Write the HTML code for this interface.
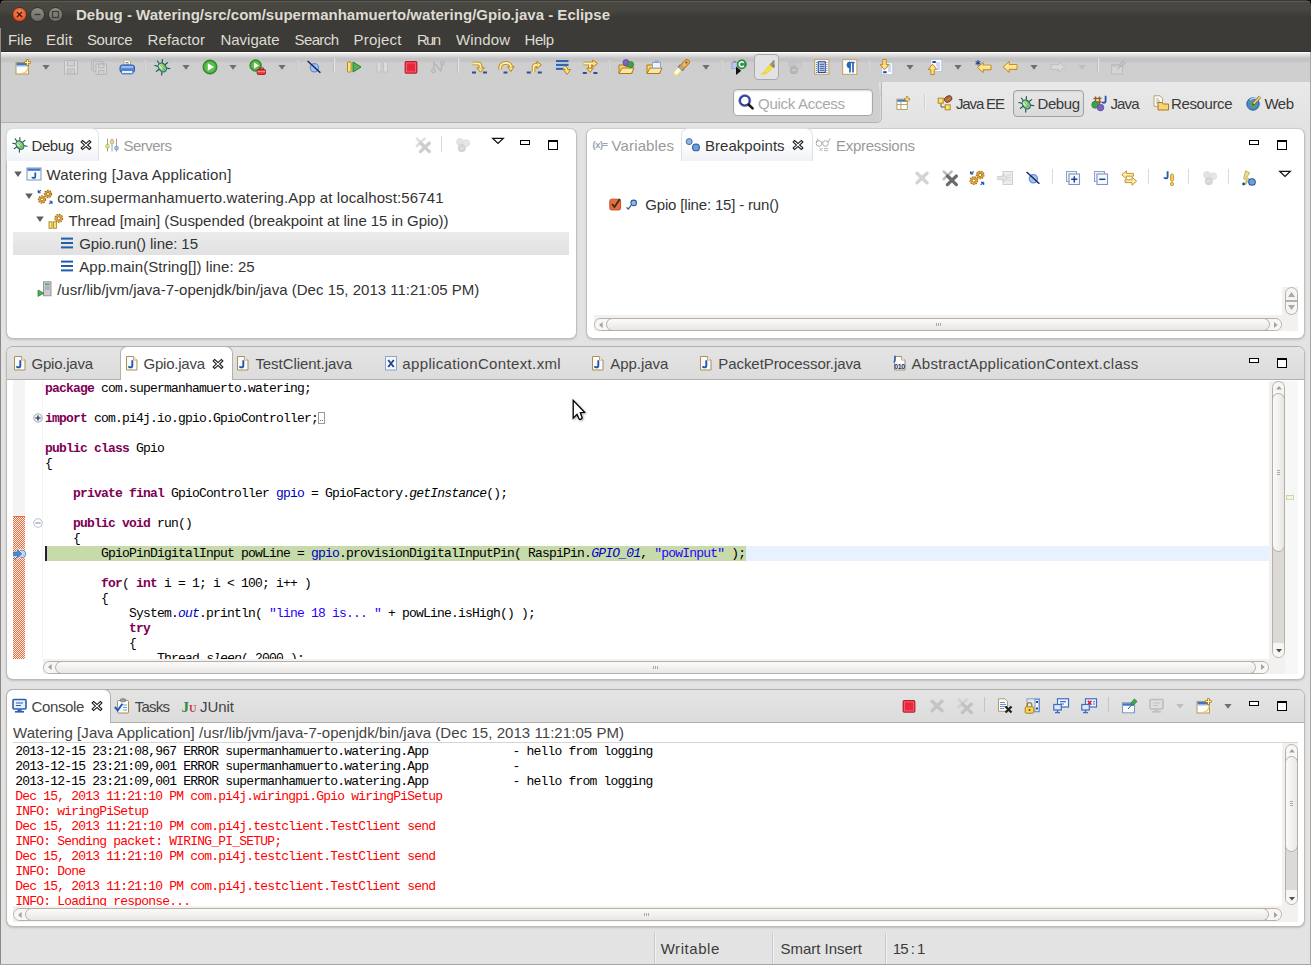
<!DOCTYPE html><html><head><meta charset="utf-8"><title>Eclipse</title><style>
*{box-sizing:border-box;margin:0;padding:0}
html,body{width:1311px;height:965px;overflow:hidden;background:#e3e3e3;font-family:"Liberation Sans",sans-serif}
.a{position:absolute}
.t{position:absolute;white-space:pre;line-height:20px;height:20px;font-family:"Liberation Sans",sans-serif}
.m{position:absolute;white-space:pre;font-family:"Liberation Mono",monospace;font-size:13px;letter-spacing:-0.8px;line-height:15px;height:15px;color:#000}
.m b{color:#7f0055}
.m .f{color:#0000c0}
.m .s{color:#2a00ff}
.m i.f{color:#0000c0}
.r{color:#ff0000}
.panel{position:absolute;background:#fff;border:1px solid #c2c0bd;border-top-color:#cfcdca;border-radius:7px;box-shadow:0 1px 2px rgba(0,0,0,.16)}
.panel.g{border-color:#b4b0ac #bdbab6 #bdbab6 #bdbab6}
.hdr{position:absolute;left:0;top:0;right:0;border-radius:6px 6px 0 0;background:linear-gradient(#e4e4e4,#dcdcdc);border-bottom:1px solid #b4b0ac}
.tab{position:absolute;background:#fff;border:1px solid #b4b0ac;border-bottom:none;border-radius:7px 7px 0 0}
.sep{position:absolute;width:1px;background:#b8b8b8}
.sbt{position:absolute;background:#f2f1f0}
.sbh{position:absolute;border:1px solid #b8b0a8;border-radius:7px;background:linear-gradient(#fbfbfa,#e9e7e5)}
.sbv{position:absolute;border:1px solid #b8b0a8;border-radius:7px;background:linear-gradient(90deg,#fbfbfa,#e9e7e5)}
svg{position:absolute;overflow:visible}
</style></head><body>
<div class="a" style="left:0;top:0;width:1311px;height:10px;background:#000"></div>
<div class="a" style="left:0;top:0;width:1311px;height:52px;background:linear-gradient(#494842 0,#474640 9px,#3c3b37 16px,#3c3b37 100%);border-radius:5px 5px 0 0;border-top:1px solid #3a3934;border-bottom:1px solid #2e2d2a"></div>
<div class="a" style="left:1px;top:1px;width:1309px;height:1px;background:#5a5952;border-radius:4px"></div>
<div class="a" style="left:12px;top:7px;width:15px;height:15px;border-radius:8px;background:radial-gradient(circle at 50% 35%,#f58a5e,#e5562a 70%,#c2411b);border:1px solid #5a2a18"></div>
<div class="a" style="left:30px;top:7px;width:15px;height:15px;border-radius:8px;background:linear-gradient(#8e8c84,#6e6c65);border:1px solid #33322e"></div>
<div class="a" style="left:48px;top:7px;width:15px;height:15px;border-radius:8px;background:linear-gradient(#8e8c84,#6e6c65);border:1px solid #33322e"></div>
<svg style="left:12px;top:7px" width="15" height="15"><path d="M5 5 L10 10 M10 5 L5 10" stroke="#4a1a0a" stroke-width="1.4"/></svg>
<svg style="left:30px;top:7px" width="15" height="15"><path d="M4.5 7.5 H10.5" stroke="#3c3b37" stroke-width="1.4"/></svg>
<svg style="left:48px;top:7px" width="15" height="15"><rect x="4.5" y="4.5" width="6" height="6" fill="none" stroke="#3c3b37" stroke-width="1.2"/></svg>
<div class="a" style="left:0;top:52px;width:1311px;height:31px;background:linear-gradient(#fff 0,#fff 1px,#eeeeee 1px,#c4c4c4 6.5px,#c5c5c5 10px,#cecece 10.5px,#cfcfcf 100%)"></div>
<div class="a" style="left:881px;top:82px;width:430px;height:46px;background:linear-gradient(#e9e9e9,#e2e2e2)"></div>
<div class="a" style="left:0;top:82px;width:882px;height:41px;background:#cfcfcf;border-bottom:1px solid #b2b2b2;border-right:1px solid #b8b8b8;border-radius:0 0 5px 0;box-shadow:inset -1px 0 #dcdcdc"></div>
<div class="a" style="left:879px;top:82px;width:2px;height:14px;background:linear-gradient(#e4e4e4,#cfcfcf)"></div>
<div class="a" style="left:733px;top:89px;width:140px;height:27px;background:#fff;border:1px solid #a8a8a8;border-radius:4px;box-shadow:inset 0 1px 2px rgba(0,0,0,.15)"></div>
<div class="a" style="left:1013px;top:90px;width:71px;height:27px;background:linear-gradient(#e6e6e6,#dadada);border:1px solid #a2a2a2;border-radius:4px;box-shadow:inset 0 1px 2px rgba(0,0,0,.08)"></div>
<div class="a" style="left:754px;top:54px;width:25px;height:26px;background:#e2e2e2;border:1px solid #a9a9a9;border-radius:4px"></div>
<div class="sep" style="left:925px;top:94px;height:16px;background:#f0f0f0;box-shadow:-1px 0 #d2d2d2"></div>

<div class="a" style="left:0;top:28px;width:1px;height:937px;background:#8d8a85"></div>
<div class="a" style="left:1310px;top:52px;width:1px;height:913px;background:#a9a6a1"></div>
<div class="a" style="left:0;top:964px;width:1311px;height:1px;background:#a9a6a1"></div>
<div class="panel" style="left:6px;top:128px;width:571px;height:211px">
<div class="tab" style="left:-1px;top:-1px;width:93px;height:33px;background:linear-gradient(#fff 40%,#f1f2f6);border-color:#dde1ea"></div>
<div class="a" style="left:6px;top:103px;width:556px;height:23px;background:linear-gradient(#ebebeb,#e1e1e1)"></div>
</div>
<div class="panel" style="left:586px;top:128px;width:719px;height:211px">
<div class="tab" style="left:94px;top:-1px;width:132px;height:33px;background:linear-gradient(#fff 40%,#f1f2f6);border-color:#dde1ea"></div>
<div class="sbt" style="left:7px;top:186px;width:704px;height:16px"></div>
<div class="sbt" style="left:695px;top:158px;width:16px;height:44px"></div>
</div>
<div class="sbh" style="left:594px;top:318px;width:688px;height:13px;background:#dcdad7;overflow:hidden"><div class="a" style="left:0;top:0;width:14px;height:100%;background:#f7f6f5"></div><div class="a" style="right:0;top:0;width:14px;height:100%;background:#f7f6f5"></div></div><div class="sbh" style="left:606px;top:318px;width:664px;height:13px"></div><svg style="left:598.5px;top:321.5px" width="4" height="6"><path d="M3.6 0 L0 3 L3.6 6Z" fill="#a2a2a2"/></svg><svg style="left:1273.5px;top:321.5px" width="4" height="6"><path d="M0 0 L3.6 3 L0 6Z" fill="#a2a2a2"/></svg><div class="a" style="left:936px;top:323px;width:1px;height:3px;background:#aaa;box-shadow:2px 0 #aaa,4px 0 #aaa"></div>
<div class="sbv" style="left:1285px;top:287px;height:28px;width:13px;background:#f6f5f4"></div>
<svg style="left:1288px;top:292px" width="7" height="5"><path d="M0 5 L3.5 0 L7 5Z" fill="#a9a9a9"/></svg>
<svg style="left:1288px;top:305px" width="7" height="5"><path d="M0 0 L3.5 5 L7 0Z" fill="#a9a9a9"/></svg>
<div class="a" style="left:1286px;top:300px;width:11px;height:2px;background:#b8b0a8"></div>
<div class="panel g" style="left:6px;top:346px;width:1299px;height:334px">
<div class="hdr" style="height:33px"></div>
<div class="tab" style="left:113px;top:-1px;width:113px;height:34px"></div>
<div class="a" style="left:6px;top:33px;width:12px;height:278.5px;background:#f4f4f4"></div>
<div class="a" style="left:6px;top:169px;width:12px;height:142.5px;background:#f3a68a;background-image:conic-gradient(#ef6a3a 25%,#fff1ea 0 50%,#ef6a3a 0 75%,#fff1ea 0);border-top:1px solid #ee6a3c;background-size:2px 2px"></div>
<div class="a" style="left:35px;top:33px;width:1px;height:278.5px;background:#f3f3f3"></div>
<div class="a" style="left:38px;top:199px;width:1224px;height:15px;background:#e8f2fe"></div>
<div class="a" style="left:38px;top:199px;width:701px;height:15px;background:#c6dba9"></div>
<div class="a" style="left:38px;top:199px;width:2px;height:15px;background:#2a1a3a"></div>
<div class="a" style="left:-7px;top:33px;width:1269px;height:278.5px;overflow:hidden">
<div class="m" style="left:45px;top:1px"><b>package</b> com.supermanhamuerto.watering;</div>
<div class="m" style="left:45px;top:31px"><b>import</b> com.pi4j.io.gpio.GpioController;</div>
<div class="m" style="left:45px;top:61px"><b>public</b> <b>class</b> Gpio</div>
<div class="m" style="left:45px;top:76px">{</div>
<div class="m" style="left:45px;top:106px">    <b>private</b> <b>final</b> GpioController <span class="f">gpio</span> = GpioFactory.<i>getInstance</i>();</div>
<div class="m" style="left:45px;top:136px">    <b>public</b> <b>void</b> run()</div>
<div class="m" style="left:45px;top:151px">    {</div>
<div class="m" style="left:45px;top:166px">        GpioPinDigitalInput powLine = <span class="f">gpio</span>.provisionDigitalInputPin( RaspiPin.<i class="f">GPIO_01</i>, <span class="s">"powInput"</span> );</div>
<div class="m" style="left:45px;top:196px">        <b>for</b>( <b>int</b> i = 1; i &lt; 100; i++ )</div>
<div class="m" style="left:45px;top:211px">        {</div>
<div class="m" style="left:45px;top:226px">            System.<i class="f">out</i>.println( <span class="s">"line 18 is... "</span> + powLine.isHigh() );</div>
<div class="m" style="left:45px;top:241px">            <b>try</b></div>
<div class="m" style="left:45px;top:256px">            {</div>
<div class="m" style="left:45px;top:271px">                Thread.<i>sleep</i>( 2000 );</div>
<div class="a" style="left:318px;top:32px;width:7px;height:12px;border:1px solid #9a9a9a"></div><div class="a" style="left:320px;top:40px;width:1px;height:1px;background:#777;box-shadow:2px 0 #777"></div>
</div>
<div class="sbt" style="left:36px;top:311.5px;width:1242px;height:15.5px"></div><div class="a" style="left:1278px;top:311.5px;width:13px;height:15.5px;background:#f7f7f7"></div>
<div class="sbt" style="left:1262px;top:34px;width:16px;height:280px"></div>
<div class="a" style="left:1278px;top:34px;width:13px;height:280px;background:#f7f7f7"></div>
<div class="a" style="left:1279px;top:148px;width:8px;height:5px;border:1px solid #c6dba9;background:#eef5e4"></div>
</div>
<div class="sbh" style="left:43px;top:660.5px;width:1226px;height:13px;background:#dcdad7;overflow:hidden"><div class="a" style="left:0;top:0;width:14px;height:100%;background:#f7f6f5"></div><div class="a" style="right:0;top:0;width:14px;height:100%;background:#f7f6f5"></div></div><div class="sbh" style="left:55px;top:660.5px;width:1201px;height:13px"></div><svg style="left:47.5px;top:664.0px" width="4" height="6"><path d="M3.6 0 L0 3 L3.6 6Z" fill="#a2a2a2"/></svg><svg style="left:1260.5px;top:664.0px" width="4" height="6"><path d="M0 0 L3.6 3 L0 6Z" fill="#a2a2a2"/></svg><div class="a" style="left:653px;top:665.5px;width:1px;height:3px;background:#aaa;box-shadow:2px 0 #aaa,4px 0 #aaa"></div>
<div class="sbv" style="left:1272px;top:381px;height:276.5px;width:13px;background:#dcdad7;overflow:hidden"><div class="a" style="left:0;top:0;height:14px;width:100%;background:#f7f6f5"></div><div class="a" style="left:0;bottom:0;height:14px;width:100%;background:#f7f6f5"></div></div><div class="sbv" style="left:1272px;top:393px;height:159px;width:13px"></div><svg style="left:1275.5px;top:386px" width="6" height="4"><path d="M0 3.6 L3 0 L6 3.6Z" fill="#a2a2a2"/></svg><svg style="left:1275.5px;top:649.0px" width="6" height="4"><path d="M0 0 L3 3.6 L6 0Z" fill="#4e4e4e"/></svg><div class="a" style="left:1277px;top:470px;width:3px;height:1px;background:#aaa;box-shadow:0 2px #aaa,0 4px #aaa"></div>
<div class="panel g" style="left:6px;top:689px;width:1299px;height:238px">
<div class="hdr" style="height:33px"></div>
<div class="tab" style="left:-1px;top:-1px;width:105px;height:34px;border-left-color:#b9b5b0"></div>
<div class="a" style="left:6px;top:51.6px;width:1285px;height:1px;background:#d6d6d6"></div>
<div class="a" style="left:-6px;top:53px;width:1290px;height:163px;overflow:hidden">
<div class="m " style="left:14.3px;top:1px">2013-12-15 23:21:08,967 ERROR supermanhamuerto.watering.App            - hello from logging</div>
<div class="m " style="left:14.3px;top:16px">2013-12-15 23:21:09,001 ERROR supermanhamuerto.watering.App            - </div>
<div class="m " style="left:14.3px;top:31px">2013-12-15 23:21:09,001 ERROR supermanhamuerto.watering.App            - hello from logging</div>
<div class="m r" style="left:14.3px;top:46px">Dec 15, 2013 11:21:10 PM com.pi4j.wiringpi.Gpio wiringPiSetup</div>
<div class="m r" style="left:14.3px;top:61px">INFO: wiringPiSetup</div>
<div class="m r" style="left:14.3px;top:76px">Dec 15, 2013 11:21:10 PM com.pi4j.testclient.TestClient send</div>
<div class="m r" style="left:14.3px;top:91px">INFO: Sending packet: WIRING_PI_SETUP;</div>
<div class="m r" style="left:14.3px;top:106px">Dec 15, 2013 11:21:10 PM com.pi4j.testclient.TestClient send</div>
<div class="m r" style="left:14.3px;top:121px">INFO: Done</div>
<div class="m r" style="left:14.3px;top:136px">Dec 15, 2013 11:21:10 PM com.pi4j.testclient.TestClient send</div>
<div class="m r" style="left:14.3px;top:151px">INFO: Loading response...</div>
</div>
<div class="sbt" style="left:6px;top:216px;width:1285px;height:16px"></div>
<div class="sbt" style="left:1275px;top:53px;width:16px;height:165px"></div>
</div>
<div class="sbh" style="left:13px;top:908px;width:1269px;height:13px;background:#dcdad7;overflow:hidden"><div class="a" style="left:0;top:0;width:14px;height:100%;background:#f7f6f5"></div><div class="a" style="right:0;top:0;width:14px;height:100%;background:#f7f6f5"></div></div><div class="sbh" style="left:25px;top:908px;width:1244px;height:13px"></div><svg style="left:17.5px;top:911.5px" width="4" height="6"><path d="M3.6 0 L0 3 L3.6 6Z" fill="#a2a2a2"/></svg><svg style="left:1273.5px;top:911.5px" width="4" height="6"><path d="M0 0 L3.6 3 L0 6Z" fill="#a2a2a2"/></svg><div class="a" style="left:644px;top:913px;width:1px;height:3px;background:#aaa;box-shadow:2px 0 #aaa,4px 0 #aaa"></div>
<div class="sbv" style="left:1285px;top:743.5px;height:161.5px;width:13px;background:#dcdad7;overflow:hidden"><div class="a" style="left:0;top:0;height:14px;width:100%;background:#f7f6f5"></div><div class="a" style="left:0;bottom:0;height:14px;width:100%;background:#f7f6f5"></div></div><div class="sbv" style="left:1285px;top:755.5px;height:96.5px;width:13px"></div><svg style="left:1288.5px;top:748.5px" width="6" height="4"><path d="M0 3.6 L3 0 L6 3.6Z" fill="#a2a2a2"/></svg><svg style="left:1288.5px;top:896.5px" width="6" height="4"><path d="M0 0 L3 3.6 L6 0Z" fill="#4e4e4e"/></svg><div class="a" style="left:1290px;top:801px;width:3px;height:1px;background:#aaa;box-shadow:0 2px #aaa,0 4px #aaa"></div>
<div class="sep" style="left:654px;top:933px;height:31px;background:#c9c9c9;box-shadow:1px 0 #f1f1f1"></div>
<div class="sep" style="left:772px;top:933px;height:31px;background:#c9c9c9;box-shadow:1px 0 #f1f1f1"></div>
<div class="sep" style="left:885px;top:933px;height:31px;background:#c9c9c9;box-shadow:1px 0 #f1f1f1"></div>
<div class="a" style="left:520px;top:140px;width:10px;height:4.5px;border:1px solid #000;background:#fff"></div><div class="a" style="left:548px;top:140px;width:10px;height:10px;border:1px solid #000;border-top-width:2px;background:#fff"></div>
<div class="a" style="left:1249px;top:140px;width:10px;height:4.5px;border:1px solid #000;background:#fff"></div><div class="a" style="left:1277px;top:140px;width:10px;height:10px;border:1px solid #000;border-top-width:2px;background:#fff"></div>
<div class="a" style="left:1249px;top:358px;width:10px;height:4.5px;border:1px solid #000;background:#fff"></div><div class="a" style="left:1277px;top:358px;width:10px;height:10px;border:1px solid #000;border-top-width:2px;background:#fff"></div>
<div class="a" style="left:1249px;top:701px;width:10px;height:4.5px;border:1px solid #000;background:#fff"></div><div class="a" style="left:1277px;top:701px;width:10px;height:10px;border:1px solid #000;border-top-width:2px;background:#fff"></div>
<svg style="left:14.5px;top:59.0px" width="16.0" height="16.0" viewBox="0 0 16 16"><rect x="1" y="3.5" width="12.5" height="11.5" fill="#fcfdff" stroke="#b39758"/><rect x="1.5" y="4" width="11.5" height="2.6" fill="#3f78c8"/><rect x="1.5" y="6.6" width="11.5" height="1" fill="#a9c6ec"/><path d="M13 8 q0 6 -7 6.5" fill="none" stroke="#f3c945" stroke-width="1.2"/><path d="M12.5 0.3 v6.4 M9.3 3.5 h6.4" stroke="#b07a10" stroke-width="2.6"/><path d="M12.5 1 v5 M10 3.5 h5" stroke="#fff2a8" stroke-width="1.1"/></svg>
<svg style="left:37.6px;top:59.1px" width="16.0" height="16.0" viewBox="0 0 16 16"><path d="M4.4 6 h7.2 l-3.6 4.8z" fill="#6f6f6f"/></svg>
<svg style="left:62.5px;top:59.0px" width="16.0" height="16.0" viewBox="0 0 16 16"><path d="M1.5 1.5 h13 v13.5 h-13z" fill="#d9d9d9" stroke="#b6b6b6"/><rect x="4.5" y="1.5" width="7" height="5.5" fill="#d0d0d0" stroke="#b6b6b6"/><rect x="4.5" y="10" width="7" height="5" fill="#d0d0d0" stroke="#b6b6b6"/><rect x="6.5" y="11.5" width="2" height="3.5" fill="#c2c2c2"/></svg>
<svg style="left:90.6px;top:59.0px" width="16.0" height="16.0" viewBox="0 0 16 16"><path d="M0.5 0.5 h10 v3 M0.5 0.5 v10 h2.5" fill="none" stroke="#b9b9b9"/><path d="M2.5 2.5 h10 v2.5 M2.5 2.5 v10 h2.5" fill="none" stroke="#b9b9b9"/><path d="M5 5 h10.5 v10.5 h-10.5z" fill="#d9d9d9" stroke="#b6b6b6"/><rect x="7.5" y="5" width="5.5" height="4" fill="#d0d0d0" stroke="#b6b6b6"/><rect x="7.5" y="11.5" width="5.5" height="4" fill="#d0d0d0" stroke="#b6b6b6"/></svg>
<svg style="left:118.6px;top:59.0px" width="16.0" height="16.0" viewBox="0 0 16 16"><path d="M5 6 v-5 h4.5 l2 2 v3z" fill="#fff" stroke="#c9a862"/><path d="M6.5 3.5 h3 M6.5 5 h3.5" stroke="#5577bb" stroke-width=".8"/><rect x="1" y="6" width="14.5" height="7.5" rx="2.2" fill="#5e8edc" stroke="#2c5cb4"/><rect x="2.2" y="7" width="12" height="2" rx="1" fill="#9cbcf0"/><rect x="2.5" y="11.2" width="11.5" height="3.6" rx="1.2" fill="#e4edfb" stroke="#2c5cb4"/></svg>
<svg style="left:154.4px;top:59.0px" width="16.0" height="16.0" viewBox="0 0 16 16"><g transform="rotate(-38 8 8)"><g stroke="#1d4d3d" stroke-width="1.1" fill="none" stroke-linecap="round"><path d="M3.2 2.4 l2.4 3 M12.8 2.4 l-2.4 3 M0.8 8 h4 M11.2 8 h4 M2.8 14.2 l2.8-3.2 M13.2 14.2 l-2.8-3.2 M8 0.4 v3.4"/></g><ellipse cx="8" cy="8.6" rx="3.6" ry="4.9" fill="#86c264" stroke="#1f6f8a" stroke-width="1.2"/><ellipse cx="7.4" cy="7.4" rx="1.9" ry="2.8" fill="#cdeab0"/><path d="M8 5.5 v6" stroke="#5aa040" stroke-width=".7"/></g></svg>
<svg style="left:177.6px;top:59.1px" width="16.0" height="16.0" viewBox="0 0 16 16"><path d="M4.4 6 h7.2 l-3.6 4.8z" fill="#6f6f6f"/></svg>
<svg style="left:201.8px;top:59.0px" width="16.0" height="16.0" viewBox="0 0 16 16"><circle cx="8" cy="8" r="7" fill="#3b9a3b" stroke="#2a7d2a"/><circle cx="8" cy="8" r="5.6" fill="#5bbf4a"/><path d="M5.8 4.2 L12 8 L5.8 11.8z" fill="#fff"/></svg>
<svg style="left:225.4px;top:59.1px" width="16.0" height="16.0" viewBox="0 0 16 16"><path d="M4.4 6 h7.2 l-3.6 4.8z" fill="#6f6f6f"/></svg>
<svg style="left:249.4px;top:59.0px" width="16.0" height="16.0" viewBox="0 0 16 16"><circle cx="6.6" cy="6.5" r="5.7" fill="#3b9a3b" stroke="#2a7d2a"/><circle cx="6.6" cy="6.5" r="4.4" fill="#5bbf4a"/><path d="M5 3.5 L10 6.5 L5 9.5z" fill="#fff"/><rect x="8.2" y="10.5" width="8.3" height="5" rx="1" fill="#e04040" stroke="#b02020"/><path d="M10.5 10.5 v-1.5 h3.7 v1.5" fill="none" stroke="#b02020" stroke-width="1.2"/><path d="M8.5 12.6 h7.8" stroke="#f59a9a" stroke-width=".9"/></svg>
<svg style="left:273.5px;top:59.1px" width="16.0" height="16.0" viewBox="0 0 16 16"><path d="M4.4 6 h7.2 l-3.6 4.8z" fill="#6f6f6f"/></svg>
<svg style="left:306.2px;top:59.0px" width="16.0" height="16.0" viewBox="0 0 16 16"><circle cx="8.4" cy="8.8" r="4.1" fill="#a9c6ea" stroke="#5f92d2" stroke-width="1.3"/><path d="M1.6 2 L14.4 13.8" stroke="#17206e" stroke-width="1.5"/></svg>
<svg style="left:346.4px;top:59.0px" width="16.0" height="16.0" viewBox="0 0 16 16"><rect x="1.5" y="3" width="3.6" height="10" rx=".6" fill="#fbe27a" stroke="#b08a1c"/><path d="M7 3 L15 8 L7 13z" fill="#52b552" stroke="#2a7d2a" stroke-linejoin="round"/></svg>
<svg style="left:374.4px;top:59.0px" width="16.0" height="16.0" viewBox="0 0 16 16"><rect x="3" y="3" width="4" height="10" fill="#dcdcdc" stroke="#c2c2c2"/><rect x="9.5" y="3" width="4" height="10" fill="#dcdcdc" stroke="#c2c2c2"/></svg>
<svg style="left:402.5px;top:59.0px" width="16.0" height="16.0" viewBox="0 0 16 16"><rect x="2.2" y="2.7" width="11.6" height="11.4" rx="1" fill="#e8273a" stroke="#bc1a2c" stroke-width="1.2"/><rect x="3.4" y="3.9" width="9.2" height="9" fill="none" stroke="#f2687a" stroke-width=".9"/></svg>
<svg style="left:430.2px;top:59.0px" width="16.0" height="16.0" viewBox="0 0 16 16"><path d="M3.8 11 V3.4 L10.8 12 L12.2 5" fill="none" stroke="#b4b4b4" stroke-width="1.3"/><circle cx="3.5" cy="11.8" r="2.1" fill="#c4c4c4" stroke="#b0b0b0" stroke-width=".7"/><circle cx="12.4" cy="4.4" r="2.1" fill="#c4c4c4" stroke="#b0b0b0" stroke-width=".7"/></svg>
<svg style="left:470.5px;top:59.0px" width="16.0" height="16.0" viewBox="0 0 16 16"><path d="M1.5 4.5 h5.5 q2.5 0 2.5 2.5 v2" fill="none" stroke="#b8820f" stroke-width="3.6" stroke-linejoin="round"/><polygon points="5.7,8.8 13.3,8.8 9.5,13.2" fill="#fde292" stroke="#b8820f" stroke-width="1" stroke-linejoin="round"/><path d="M1.5 4.5 h5.5 q2.5 0 2.5 2.5 v2" fill="none" stroke="#fff2b0" stroke-width="1.8" stroke-linejoin="round"/><rect x="1" y="12.5" width="4" height="2" fill="#2f4c94"/><rect x="12" y="12.5" width="4" height="2" fill="#2f4c94"/></svg>
<svg style="left:498.3px;top:59.0px" width="16.0" height="16.0" viewBox="0 0 16 16"><path d="M2.3 10.5 q-.8 -6.5 5.5 -6.5 q5 0 5.2 4" fill="none" stroke="#b8820f" stroke-width="3.6" stroke-linejoin="round"/><polygon points="9.6,7.8 16,7.8 12.8,12.6" fill="#fde292" stroke="#b8820f" stroke-width="1" stroke-linejoin="round"/><path d="M2.3 10.5 q-.8 -6.5 5.5 -6.5 q5 0 5.2 4" fill="none" stroke="#fff2b0" stroke-width="1.8" stroke-linejoin="round"/><rect x="5.5" y="12.5" width="4" height="2" fill="#2f4c94"/></svg>
<svg style="left:526.4px;top:59.0px" width="16.0" height="16.0" viewBox="0 0 16 16"><path d="M7.5 13 v-4.5 q0 -2.5 2.5 -2.5 h1" fill="none" stroke="#b8820f" stroke-width="3.6" stroke-linejoin="round"/><polygon points="10.8,2.4 15.4,6 10.8,9.6" fill="#fde292" stroke="#b8820f" stroke-width="1" stroke-linejoin="round"/><path d="M7.5 13 v-4.5 q0 -2.5 2.5 -2.5 h1" fill="none" stroke="#fff2b0" stroke-width="1.8" stroke-linejoin="round"/><rect x="0.8" y="12.5" width="4" height="2" fill="#2f4c94"/><rect x="11.8" y="12.5" width="4" height="2" fill="#2f4c94"/></svg>
<svg style="left:554.5px;top:59.0px" width="16.0" height="16.0" viewBox="0 0 16 16"><rect x="1" y="1" width="12.5" height="2.1" fill="#2c66b6"/><rect x="1" y="4.9" width="12.5" height="2.1" fill="#2c66b6"/><rect x="1" y="8.8" width="7" height="2.1" fill="#2c66b6"/><path d="M8.5 8.2 q3 .2 3.2 3" fill="none" stroke="#b8820f" stroke-width="3.2" stroke-linejoin="round"/><polygon points="8.4,10.6 15.6,10.6 12,15.4" fill="#fde292" stroke="#b8820f" stroke-width="1" stroke-linejoin="round"/><path d="M8.5 8.2 q3 .2 3.2 3" fill="none" stroke="#fff2b0" stroke-width="1.5" stroke-linejoin="round"/></svg>
<svg style="left:582.4px;top:59.0px" width="16.0" height="16.0" viewBox="0 0 16 16"><path d="M1.5 4.5 h9.5 M8 5 v5" fill="none" stroke="#b8820f" stroke-width="3.6" stroke-linejoin="round"/><polygon points="10.6,1 15.6,4.5 10.6,8" fill="#fde292" stroke="#b8820f" stroke-width="1" stroke-linejoin="round"/><path d="M1.5 4.5 h9.5 M8 5 v5" fill="none" stroke="#fff2b0" stroke-width="1.8" stroke-linejoin="round"/><polygon points="4.8,9.2 11.2,9.2 8,13.4" fill="#fde292" stroke="#b8820f" stroke-linejoin="round"/><rect x="0.8" y="13" width="4" height="2" fill="#2f4c94"/><rect x="11.4" y="13" width="4" height="2" fill="#2f4c94"/></svg>
<svg style="left:618.0px;top:59.0px" width="16.0" height="16.0" viewBox="0 0 16 16"><path d="M1 6 h5 l1.5 1.5 h6.5 v7 h-13z" fill="#f7d47a" stroke="#b07a10"/><path d="M1 14.5 l3 -5.5 h12 l-2.5 5.5z" fill="#fbe6a4" stroke="#b07a10" stroke-linejoin="round"/><circle cx="8" cy="3.6" r="3.1" fill="#7a63c4" stroke="#54409a" stroke-width=".7"/><circle cx="12.6" cy="5.6" r="3.1" fill="#3f9f4f" stroke="#2a7a38" stroke-width=".7"/></svg>
<svg style="left:646.0px;top:59.0px" width="16.0" height="16.0" viewBox="0 0 16 16"><path d="M1 6 h5 l1.5 1.5 h6.5 v7 h-13z" fill="#f7d47a" stroke="#b07a10"/><path d="M1 14.5 l3 -5.5 h12 l-2.5 5.5z" fill="#fbe6a4" stroke="#b07a10" stroke-linejoin="round"/><rect x="6.5" y="3.5" width="8" height="5.5" fill="#eef3fc" stroke="#8fa7d4"/><rect x="8.5" y="1.6" width="4" height="2" fill="#8fa7d4"/></svg>
<svg style="left:674.3px;top:59.0px" width="16.0" height="16.0" viewBox="0 0 16 16"><path d="M2.2 13.8 L5.4 10.6" stroke="#f3d878" stroke-width="5.4" stroke-linecap="round"/><path d="M2.2 13.8 L5.4 10.6" stroke="#fffbe0" stroke-width="3.6" stroke-linecap="round"/><path d="M9.4 6.6 L13 3" stroke="#b8741a" stroke-width="5.8" stroke-linecap="round"/><path d="M9.4 6.6 L13 3" stroke="#f5b44a" stroke-width="4" stroke-linecap="round"/><path d="M6 10 L8.4 7.6" stroke="#6f6a64" stroke-width="6.6"/><path d="M6 10 L8.4 7.6" stroke="#aaa59e" stroke-width="4.8"/><circle cx="12.4" cy="3.6" r="1" fill="#27508f"/></svg>
<svg style="left:697.6px;top:59.1px" width="16.0" height="16.0" viewBox="0 0 16 16"><path d="M4.4 6 h7.2 l-3.6 4.8z" fill="#6f6f6f"/></svg>
<svg style="left:731.0px;top:59.0px" width="16.0" height="16.0" viewBox="0 0 16 16"><rect x="0.8" y="3.5" width="6" height="6" fill="#b5c9ec" stroke="#8fa2cc" stroke-width=".8"/><path d="M2.2 2.5 h3" stroke="#c07080" stroke-width="1.2"/><path d="M5 7.5 v8.5 l5.2 -4.2z" fill="#111"/><circle cx="10.8" cy="5.3" r="4.5" fill="#2f9a48" stroke="#1d7a34" stroke-width=".8"/><path d="M12.8 3.9 a2.5 2.5 0 1 0 0 2.9" fill="none" stroke="#fff" stroke-width="1.5"/></svg>
<svg style="left:758.5px;top:59.0px" width="16.0" height="16.0" viewBox="0 0 16 16"><path d="M2 14.8 h5" stroke="#f2d21e" stroke-width="1.4"/><path d="M4.5 13.5 L11 5.5 L14 8.2 L8.5 14z" fill="#f7e041" stroke="#e6c820" stroke-width=".6"/><path d="M11 5.5 L15 1.2 L15.4 8.4 L14 8.2z" fill="#8f8676" stroke="#7a705e" stroke-width=".5"/><path d="M12 6.3 L15.2 3.5" stroke="#b8ae9a" stroke-width="1"/></svg>
<svg style="left:786.5px;top:59.0px" width="16.0" height="16.0" viewBox="0 0 16 16"><circle cx="5" cy="5" r="3.4" fill="#c6c6c6" stroke="#bdbdbd" stroke-width=".8"/><circle cx="11.2" cy="6.2" r="3.4" fill="#cacaca" stroke="#bdbdbd" stroke-width=".8"/><circle cx="6.8" cy="11.2" r="3.7" fill="#b6b6b6" stroke="#adadad" stroke-width=".8"/><path d="M4.5 11.2 h4.6" stroke="#d8d8d8" stroke-width="1"/></svg>
<svg style="left:814.0px;top:59.0px" width="16.0" height="16.0" viewBox="0 0 16 16"><rect x="0.6" y="0.6" width="14.3" height="14.8" fill="#fefefe" stroke="#c4ab74" stroke-width="1.2"/><rect x="4.2" y="2.8" width="7" height="10.6" fill="#e8eefa" stroke="#1f3f8f" stroke-width="1.1"/><path d="M5.5 5.2 h4.5 M5.5 7.2 h4.5 M5.5 9.2 h4.5 M5.5 11.2 h4.5" stroke="#1f3f8f" stroke-width="1"/><path d="M2.4 3 v11 M12.9 3 v11" stroke="#4f74b8" stroke-width="1" stroke-dasharray="1 1"/></svg>
<svg style="left:842.0px;top:59.0px" width="16.0" height="16.0" viewBox="0 0 16 16"><rect x="0.6" y="0.6" width="14.3" height="14.8" fill="#fefefe" stroke="#c4ab74" stroke-width="1.2"/><path d="M7.2 3.5 h5.5" stroke="#2c66b6" stroke-width="1.4"/><path d="M8 3 v10.5 M11 3 v10.5" stroke="#2c66b6" stroke-width="1.7"/><path d="M8 3 a3 3 0 0 0 0 6z" fill="#2c66b6" stroke="#2c66b6"/></svg>
<svg style="left:877.5px;top:59.0px" width="16.0" height="16.0" viewBox="0 0 16 16"><rect x="3.8" y="3.8" width="11" height="12" fill="#fbfcff" stroke="#b4c2de" stroke-width=".9"/><path d="M9 6 h4 M9 8 h4 M10 10 h3 M10 12 h3" stroke="#9ab0d8" stroke-width=".9"/><rect x="5.2" y="12.2" width="3.4" height="2" fill="#24468f"/><polygon points="4.8,0.4 8.2,0.4 8.2,5.6 10.8,5.6 6.5,10.8 2.2,5.6 4.8,5.6" fill="#fde292" stroke="#bf8614" stroke-linejoin="round"/></svg>
<svg style="left:901.6px;top:59.1px" width="16.0" height="16.0" viewBox="0 0 16 16"><path d="M4.4 6 h7.2 l-3.6 4.8z" fill="#6f6f6f"/></svg>
<svg style="left:925.5px;top:59.0px" width="16.0" height="16.0" viewBox="0 0 16 16"><rect x="4.8" y="0.6" width="11" height="12" fill="#fbfcff" stroke="#b4c2de" stroke-width=".9"/><path d="M10 4 h4 M10 6 h4 M11 8 h3 M11 10 h3" stroke="#9ab0d8" stroke-width=".9"/><rect x="6.4" y="2" width="3.4" height="2" fill="#24468f"/><polygon points="4.8,15.6 8.2,15.6 8.2,10.4 10.8,10.4 6.5,5.2 2.2,10.4 4.8,10.4" fill="#fde292" stroke="#bf8614" stroke-linejoin="round"/></svg>
<svg style="left:949.6px;top:59.1px" width="16.0" height="16.0" viewBox="0 0 16 16"><path d="M4.4 6 h7.2 l-3.6 4.8z" fill="#6f6f6f"/></svg>
<svg style="left:974.5px;top:59.0px" width="16.0" height="16.0" viewBox="0 0 16 16"><polygon points="2.5,8.5 8.2,3.4 8.2,6.2 16,6.2 16,10.8 8.2,10.8 8.2,13.6" fill="#fde292" stroke="#bf8614" stroke-linejoin="round"/><path d="M8.6 7.1 h7" stroke="#fff0b0" stroke-width=".9"/><path d="M3 1 v5.6 M0.6 2.4 l4.8 2.8 M5.4 2.4 l-4.8 2.8" stroke="#24468f" stroke-width="1.1"/></svg>
<svg style="left:1002.2px;top:59.0px" width="16.0" height="16.0" viewBox="0 0 16 16"><polygon points="1.2,8 7.2,2.6 7.2,5.6 15,5.6 15,10.4 7.2,10.4 7.2,13.4" fill="#fde292" stroke="#bf8614" stroke-linejoin="round"/><path d="M3 8 L7 4.6 M7.6 6.5 h7" stroke="#fff0b0" stroke-width=".9"/></svg>
<svg style="left:1025.6px;top:59.1px" width="16.0" height="16.0" viewBox="0 0 16 16"><path d="M4.4 6 h7.2 l-3.6 4.8z" fill="#6f6f6f"/></svg>
<svg style="left:1050.0px;top:59.0px" width="16.0" height="16.0" viewBox="0 0 16 16"><polygon points="14.8,8 8.8,2.6 8.8,5.6 1,5.6 1,10.4 8.8,10.4 8.8,13.4" fill="#d9d9d9" stroke="#bdbdbd" stroke-linejoin="round"/></svg>
<svg style="left:1073.6px;top:59.1px" width="16.0" height="16.0" viewBox="0 0 16 16"><path d="M4.4 6 h7.2 l-3.6 4.8z" fill="#bdbdbd"/></svg>
<svg style="left:1110.0px;top:59.0px" width="16.0" height="16.0" viewBox="0 0 16 16"><rect x="1.5" y="5.5" width="11" height="9.5" fill="#d4d4d4" stroke="#bcbcbc"/><rect x="2" y="6" width="10" height="2" fill="#c6c6c6"/><path d="M7.5 10.5 L10.5 7" stroke="#b0b0b0" stroke-width="1.1"/><path d="M9.4 5.6 L12.8 1.6 L15.4 3.8 L11.8 7.8z" fill="#c2c2c2" stroke="#b0b0b0" stroke-width=".8"/></svg>
<div class="sep" style="left:145px;top:60px;height:15px;background:#d5d5d5;box-shadow:-1px 0 #cbcbcb"></div>
<div class="sep" style="left:298px;top:60px;height:15px;background:#d5d5d5;box-shadow:-1px 0 #cbcbcb"></div>
<div class="sep" style="left:609px;top:60px;height:15px;background:#d5d5d5;box-shadow:-1px 0 #cbcbcb"></div>
<div class="sep" style="left:722px;top:60px;height:15px;background:#d5d5d5;box-shadow:-1px 0 #cbcbcb"></div>
<div class="sep" style="left:869px;top:60px;height:15px;background:#d5d5d5;box-shadow:-1px 0 #cbcbcb"></div>
<div class="sep" style="left:334px;top:58px;height:15px;background:#e6e6e6;box-shadow:-1px 0 #bebebe"></div>
<div class="sep" style="left:458px;top:58px;height:15px;background:#e6e6e6;box-shadow:-1px 0 #bebebe"></div>
<div class="sep" style="left:1098px;top:58px;height:15px;background:#e6e6e6;box-shadow:-1px 0 #bebebe"></div>
<svg style="left:738.0px;top:94.0px" width="16.0" height="16.0" viewBox="0 0 16 16"><circle cx="6.8" cy="6.6" r="5" fill="#fff" stroke="#2f3f9c" stroke-width="2.4"/><circle cx="6.8" cy="6.6" r="6.1" fill="none" stroke="#8a95d0" stroke-width=".6"/><path d="M10.8 10.8 L14.6 14.4" stroke="#1a1a1a" stroke-width="2.6" stroke-linecap="round"/></svg>
<svg style="left:895.8px;top:96.0px" width="14.4" height="14.4" viewBox="0 0 16 16"><rect x="1" y="3.5" width="11.5" height="11.5" fill="#fcfdff" stroke="#b39758"/><rect x="1.5" y="4" width="10.5" height="2.4" fill="#3f78c8"/><path d="M1 9.5 h11.5 M5.5 6.5 v8.5" stroke="#b39758" stroke-width="1"/><path d="M12.3 0.3 v6.4 M9.1 3.5 h6.4" stroke="#b07a10" stroke-width="2.6"/><path d="M12.3 1 v5 M9.8 3.5 h5" stroke="#fff2a8" stroke-width="1.1"/></svg>
<svg style="left:937.0px;top:94.5px" width="16.0" height="16.0" viewBox="0 0 16 16"><path d="M4 6 v6 h6" fill="none" stroke="#6a5a2a" stroke-width="1"/><rect x="1.2" y="3.2" width="5" height="5" fill="#fbe27a" stroke="#b08a1c"/><rect x="8.2" y="9.8" width="5" height="5" fill="#fbe27a" stroke="#b08a1c"/><ellipse cx="11.2" cy="4" rx="4" ry="3" transform="rotate(-30 11.2 4)" fill="#a8623a" stroke="#6a3818" stroke-width=".8"/><path d="M8.5 5.5 q3 -.5 5.5 -3" stroke="#e0a070" stroke-width=".8" fill="none"/></svg>
<svg style="left:1018.0px;top:95.5px" width="16.0" height="16.0" viewBox="0 0 16 16"><g transform="rotate(-38 8 8)"><g stroke="#1d4d3d" stroke-width="1.1" fill="none" stroke-linecap="round"><path d="M3.2 2.4 l2.4 3 M12.8 2.4 l-2.4 3 M0.8 8 h4 M11.2 8 h4 M2.8 14.2 l2.8-3.2 M13.2 14.2 l-2.8-3.2 M8 0.4 v3.4"/></g><ellipse cx="8" cy="8.6" rx="3.6" ry="4.9" fill="#86c264" stroke="#1f6f8a" stroke-width="1.2"/><ellipse cx="7.4" cy="7.4" rx="1.9" ry="2.8" fill="#cdeab0"/><path d="M8 5.5 v6" stroke="#5aa040" stroke-width=".7"/></g></svg>
<svg style="left:1091.0px;top:95.0px" width="16.0" height="16.0" viewBox="0 0 16 16"><path d="M2.5 3.5 h8 M2.5 7 h8 M4.5 1.5 v8 M8.5 1.5 v8" stroke="#9a5a2a" stroke-width="1.3"/><circle cx="4.2" cy="9.8" r="3.5" fill="#3f9f4f" stroke="#2a7a38" stroke-width=".7"/><circle cx="9.5" cy="12.6" r="3.3" fill="#7a63c4" stroke="#54409a" stroke-width=".7"/><path d="M14.6 0.8 v5 q0 2 -1.8 2 q-1.2 0 -1.5 -1" fill="none" stroke="#2257a8" stroke-width="1.8"/></svg>
<svg style="left:1152.5px;top:94.5px" width="16.0" height="16.0" viewBox="0 0 16 16"><path d="M1 0.8 h6 l2.5 2.5 v8 h-8.5z" fill="#fffdf2" stroke="#b89858" stroke-width=".9"/><path d="M3 4 h3 M3 6 h4 M3 8 h2" stroke="#7a9ad0" stroke-width=".8"/><path d="M5 7.5 h4 l1.3 1.5 h5.2 v6 h-10.5z" fill="#f7d47a" stroke="#b07a10"/></svg>
<svg style="left:1245.5px;top:95.0px" width="16.0" height="16.0" viewBox="0 0 16 16"><circle cx="7" cy="9" r="6.2" fill="#4f86cc" stroke="#2a5a9f"/><path d="M3.5 6 q3 -1 4.5 2 t2 5 q-3 1 -5 -1z" fill="#4fa84f"/><path d="M4 5 a6 6 0 0 1 7 -1" stroke="#bcd6f4" stroke-width="1.2" fill="none"/><path d="M7 9.5 L14 1.8" stroke="#8a6a2a" stroke-width="3"/><path d="M7.6 8.8 L14 1.8" stroke="#f3d48a" stroke-width="1.6"/><path d="M6.2 10.4 l1 -1.8 l1 1z" fill="#333"/></svg>
<svg style="left:11.7px;top:136.9px" width="15.2" height="15.2" viewBox="0 0 16 16"><g transform="rotate(-38 8 8)"><g stroke="#1d4d3d" stroke-width="1.1" fill="none" stroke-linecap="round"><path d="M3.2 2.4 l2.4 3 M12.8 2.4 l-2.4 3 M0.8 8 h4 M11.2 8 h4 M2.8 14.2 l2.8-3.2 M13.2 14.2 l-2.8-3.2 M8 0.4 v3.4"/></g><ellipse cx="8" cy="8.6" rx="3.6" ry="4.9" fill="#86c264" stroke="#1f6f8a" stroke-width="1.2"/><ellipse cx="7.4" cy="7.4" rx="1.9" ry="2.8" fill="#cdeab0"/><path d="M8 5.5 v6" stroke="#5aa040" stroke-width=".7"/></g></svg>
<svg style="left:78.0px;top:137.2px" width="16.0" height="16.0" viewBox="0 0 16 16"><path d="M4.7 5 L11.3 11 M11.3 5 L4.7 11" stroke="#161616" stroke-width="3.3" stroke-linecap="square"/><path d="M4.3 4.6 L11.7 11.4 M11.7 4.6 L4.3 11.4" stroke="#fff" stroke-width="1.25" stroke-linecap="butt"/></svg>
<svg style="left:103.5px;top:137.0px" width="16.0" height="16.0" viewBox="0 0 16 16"><path d="M3.5 1.5 v13 M8 1.5 v13 M12.5 1.5 v13" stroke="#9aa0a8" stroke-width="1"/><rect x="1.8" y="7.5" width="3.4" height="3.4" rx=".8" fill="#e4ec8a" stroke="#a8b048" stroke-width=".7"/><rect x="6.3" y="3" width="3.4" height="3.4" rx=".8" fill="#f4dc9a" stroke="#c0a050" stroke-width=".7"/><rect x="10.8" y="9.5" width="3.4" height="3.4" rx=".8" fill="#a8c4ec" stroke="#6a8cc4" stroke-width=".7"/></svg>
<svg style="left:414.5px;top:137.0px" width="16.0" height="16.0" viewBox="0 0 16 16"><path d="M1.8 1.6 L9.6 9 M9.6 1.6 L1.8 9" stroke="#dedede" stroke-width="2.6" stroke-linecap="round"/><path d="M5.4 6 L14.4 14.6 M14.4 6 L5.4 14.6" stroke="#cdcdcd" stroke-width="3.2" stroke-linecap="round"/></svg>
<div class="sep" style="left:441px;top:136px;height:16px;background:#dcdcdc"></div>
<svg style="left:454.5px;top:137.0px" width="16.0" height="16.0" viewBox="0 0 16 16"><circle cx="5" cy="5" r="3.4" fill="#e3e3e3" stroke="#dadada" stroke-width=".8"/><circle cx="11.2" cy="6.2" r="3.4" fill="#e6e6e6" stroke="#dadada" stroke-width=".8"/><circle cx="6.8" cy="11.2" r="3.7" fill="#d6d6d6" stroke="#d0d0d0" stroke-width=".8"/><path d="M4.5 11.2 h4.6" stroke="#e8e8e8" stroke-width="1"/></svg>
<svg style="left:490.0px;top:132.5px" width="16.0" height="16.0" viewBox="0 0 16 16"><path d="M2.8 5.4 h10.4 l-5.2 5z" fill="#fff" stroke="#111" stroke-width="1.3" stroke-linejoin="miter"/></svg>
<svg style="left:9.7px;top:165.6px" width="16.0" height="16.0" viewBox="0 0 16 16"><path d="M4.2 5.4 h7.6 l-3.8 5.6z" fill="#5e5e5e"/></svg>
<svg style="left:20.6px;top:188.2px" width="16.0" height="16.0" viewBox="0 0 16 16"><path d="M4.2 5.4 h7.6 l-3.8 5.6z" fill="#5e5e5e"/></svg>
<svg style="left:31.7px;top:211.0px" width="16.0" height="16.0" viewBox="0 0 16 16"><path d="M4.2 5.4 h7.6 l-3.8 5.6z" fill="#5e5e5e"/></svg>
<svg style="left:26.0px;top:166.0px" width="16.0" height="16.0" viewBox="0 0 16 16"><rect x="1" y="2" width="14" height="12" fill="#f6f9ff" stroke="#7f95c0"/><rect x="1.5" y="2.5" width="13" height="2.3" fill="#3f78c8"/><path d="M9.3 6.6 v3.6 q0 1.7 -1.7 1.7 q-1.2 0 -1.5 -1" fill="none" stroke="#2257a8" stroke-width="1.7"/></svg>
<svg style="left:37.0px;top:189.0px" width="16.0" height="16.0" viewBox="0 0 16 16"><circle cx="5" cy="10.5" r="3.6" fill="#f6c85a" stroke="#a8680c" stroke-width="1.1" stroke-dasharray="1.6 1"/><circle cx="5" cy="10.5" r="2.7" fill="#f6c85a" stroke="#b8781c" stroke-width=".6"/><circle cx="5" cy="10.5" r="1.51" fill="#fff" stroke="#8a5408" stroke-width=".8"/><circle cx="11" cy="5" r="3.6" fill="#f6c85a" stroke="#a8680c" stroke-width="1.1" stroke-dasharray="1.6 1"/><circle cx="11" cy="5" r="2.7" fill="#f6c85a" stroke="#b8781c" stroke-width=".6"/><circle cx="11" cy="5" r="1.51" fill="#fff" stroke="#8a5408" stroke-width=".8"/><path d="M1 3.5 l3 -2.2 M1 3.5 l.4 -2.6 M1 3.5 l2.6 .4 M15.2 12.5 l-3 2.2 M15.2 12.5 l-.4 2.6 M15.2 12.5 l-2.6 -.4" stroke="#2a5aa8" stroke-width="1.1" fill="none"/></svg>
<svg style="left:48.0px;top:212.5px" width="16.0" height="16.0" viewBox="0 0 16 16"><circle cx="10.8" cy="5.3" r="3.9" fill="#f6c85a" stroke="#a8680c" stroke-width="1.1" stroke-dasharray="1.6 1"/><circle cx="10.8" cy="5.3" r="3.0" fill="#f6c85a" stroke="#b8781c" stroke-width=".6"/><circle cx="10.8" cy="5.3" r="1.64" fill="#fff" stroke="#8a5408" stroke-width=".8"/><rect x="1" y="8.8" width="3" height="6.5" fill="#fbe27a" stroke="#a88a1c" stroke-width=".9"/><rect x="5.4" y="8.8" width="3" height="6.5" fill="#fbe27a" stroke="#a88a1c" stroke-width=".9"/></svg>
<svg style="left:59.0px;top:235.0px" width="16.0" height="16.0" viewBox="0 0 16 16"><rect x="2" y="2.6" width="12" height="2" fill="#235fa8"/><rect x="2" y="7" width="12" height="2" fill="#235fa8"/><rect x="2" y="11.4" width="12" height="2" fill="#235fa8"/></svg>
<svg style="left:59.0px;top:258.0px" width="16.0" height="16.0" viewBox="0 0 16 16"><rect x="2" y="2.6" width="12" height="2" fill="#235fa8"/><rect x="2" y="7" width="12" height="2" fill="#235fa8"/><rect x="2" y="11.4" width="12" height="2" fill="#235fa8"/></svg>
<svg style="left:36.5px;top:280.5px" width="16.0" height="16.0" viewBox="0 0 16 16"><rect x="6.5" y="0.8" width="7.5" height="14" fill="#c9ccd0" stroke="#8a8f96" stroke-width=".9"/><rect x="8" y="2.5" width="4.5" height="1.6" fill="#4fa84f"/><path d="M8 6 h4.5 M8 8 h4.5" stroke="#8a8f96" stroke-width=".9"/><path d="M1 9 L7 12.2 L1 15.4z" fill="#4cb04c" stroke="#2a7d2a" stroke-width=".7"/></svg>
<svg style="left:591.5px;top:136.5px" width="16.0" height="16.0" viewBox="0 0 16 16"><text x="0.5" y="11" font-family="Liberation Sans" font-size="9.5" font-weight="bold" fill="#9aa3b6" letter-spacing="-.5">(x)=</text></svg>
<svg style="left:684.5px;top:136.5px" width="16.0" height="16.0" viewBox="0 0 16 16"><circle cx="4.2" cy="4.6" r="3" fill="#8fb4e0" stroke="#3f6cae" stroke-width="1"/><circle cx="11" cy="10.4" r="3.4" fill="#6f9fd8" stroke="#2a5a9f" stroke-width="1.1"/></svg>
<svg style="left:790.0px;top:137.2px" width="16.0" height="16.0" viewBox="0 0 16 16"><path d="M4.7 5 L11.3 11 M11.3 5 L4.7 11" stroke="#161616" stroke-width="3.3" stroke-linecap="square"/><path d="M4.3 4.6 L11.7 11.4 M11.7 4.6 L4.3 11.4" stroke="#fff" stroke-width="1.25" stroke-linecap="butt"/></svg>
<svg style="left:815.0px;top:137.0px" width="16.0" height="16.0" viewBox="0 0 16 16"><circle cx="4" cy="6.5" r="2.8" fill="none" stroke="#a9acb2" stroke-width="1"/><circle cx="10.5" cy="6.5" r="2.8" fill="none" stroke="#a9acb2" stroke-width="1"/><path d="M6.8 6 h1 M1.2 5 l2 -3.5 M13.2 5 l2 -3.5" stroke="#a9acb2" stroke-width="1" fill="none"/><path d="M4.5 11 l3 3 M7.5 11 l-3 3 M9 11.6 h4 M9 13.6 h4" stroke="#b4b7bc" stroke-width="1"/></svg>
<svg style="left:913.5px;top:170.0px" width="16.0" height="16.0" viewBox="0 0 16 16"><path d="M3 3.2 L13 12.8 M13 3.2 L3 12.8" stroke="#d4d4d4" stroke-width="3.4" stroke-linecap="round"/></svg>
<svg style="left:941.5px;top:170.0px" width="16.0" height="16.0" viewBox="0 0 16 16"><path d="M1.8 1.6 L9.6 9 M9.6 1.6 L1.8 9" stroke="#bcbcbc" stroke-width="2.6" stroke-linecap="round"/><path d="M5.4 6 L14.4 14.6 M14.4 6 L5.4 14.6" stroke="#6a6a6a" stroke-width="3.2" stroke-linecap="round"/></svg>
<svg style="left:969.0px;top:170.0px" width="16.0" height="16.0" viewBox="0 0 16 16"><circle cx="4.8" cy="10.6" r="3.8" fill="#f6c85a" stroke="#a8680c" stroke-width="1.1" stroke-dasharray="1.6 1"/><circle cx="4.8" cy="10.6" r="2.9" fill="#f6c85a" stroke="#b8781c" stroke-width=".6"/><circle cx="4.8" cy="10.6" r="1.60" fill="#fff" stroke="#8a5408" stroke-width=".8"/><circle cx="11.2" cy="5" r="3.8" fill="#f6c85a" stroke="#a8680c" stroke-width="1.1" stroke-dasharray="1.6 1"/><circle cx="11.2" cy="5" r="2.9" fill="#f6c85a" stroke="#b8781c" stroke-width=".6"/><circle cx="11.2" cy="5" r="1.60" fill="#fff" stroke="#8a5408" stroke-width=".8"/><path d="M1.5 3.8 l3.2 -2.4 M1.5 3.8 l.2 -2.6 M1.5 3.8 l2.8 0 M14.8 12.4 l-3.2 2.4 M14.8 12.4 l-.2 2.6 M14.8 12.4 l-2.8 0" stroke="#2a5aa8" stroke-width="1.2" fill="none"/></svg>
<svg style="left:997.0px;top:170.0px" width="16.0" height="16.0" viewBox="0 0 16 16"><rect x="6" y="1.5" width="9.5" height="13" fill="#ececec" stroke="#d0d0d0"/><path d="M10 5 h4 M10 7.5 h4 M10 10 h4" stroke="#d4d4d4" stroke-width=".9"/><polygon points="0.6,6.4 6,6.4 6,4 10.4,8 6,12 6,9.6 0.6,9.6" fill="#e4e4e4" stroke="#cfcfcf"/></svg>
<svg style="left:1025.3px;top:170.0px" width="16.0" height="16.0" viewBox="0 0 16 16"><circle cx="8.4" cy="8.8" r="4.1" fill="#a9c6ea" stroke="#5f92d2" stroke-width="1.3"/><path d="M1.6 2 L14.4 13.8" stroke="#17206e" stroke-width="1.5"/></svg>
<svg style="left:1065.3px;top:170.0px" width="16.0" height="16.0" viewBox="0 0 16 16"><rect x="1.5" y="1.5" width="10" height="10" fill="#eef3fc" stroke="#8fa2c8"/><rect x="4" y="4" width="10.5" height="10.5" fill="#f6f9ff" stroke="#7f93bd" stroke-width="1.1"/><path d="M6.2 9.3 h6.2 M9.3 6.2 v6.2" stroke="#1f3f8f" stroke-width="1.5"/></svg>
<svg style="left:1093.3px;top:170.0px" width="16.0" height="16.0" viewBox="0 0 16 16"><rect x="1.5" y="1.5" width="10" height="10" fill="#eef3fc" stroke="#8fa2c8"/><rect x="4" y="4" width="10.5" height="10.5" fill="#f6f9ff" stroke="#7f93bd" stroke-width="1.1"/><path d="M6.2 9.3 h6.2" stroke="#1f3f8f" stroke-width="1.5"/></svg>
<svg style="left:1121.0px;top:170.0px" width="16.0" height="16.0" viewBox="0 0 16 16"><polygon points="0.8,4.8 5.4,0.8 5.4,3.4 12.4,3.4 12.4,6.2 5.4,6.2 5.4,8.8" fill="#fdeeb0" stroke="#c08a14" stroke-linejoin="round" stroke-width=".9"/><polygon points="15.6,11.2 11,7.2 11,9.8 4,9.8 4,12.6 11,12.6 11,15.2" fill="#fdeeb0" stroke="#c08a14" stroke-linejoin="round" stroke-width=".9"/></svg>
<svg style="left:1161.8px;top:170.0px" width="16.0" height="16.0" viewBox="0 0 16 16"><path d="M5.6 1.2 v5.2 q0 2 -1.9 2 q-1.3 0 -1.6 -1.1" fill="none" stroke="#2560b4" stroke-width="1.9"/><rect x="8.6" y="4" width="2.8" height="7.2" rx="1.3" fill="#fbd45a" stroke="#c09020" stroke-width=".9"/><circle cx="10" cy="14" r="1.6" fill="#fbd45a" stroke="#c09020" stroke-width=".9"/></svg>
<svg style="left:1201.5px;top:170.0px" width="16.0" height="16.0" viewBox="0 0 16 16"><circle cx="5" cy="5" r="3.4" fill="#e3e3e3" stroke="#dadada" stroke-width=".8"/><circle cx="11.2" cy="6.2" r="3.4" fill="#e6e6e6" stroke="#dadada" stroke-width=".8"/><circle cx="6.8" cy="11.2" r="3.7" fill="#d6d6d6" stroke="#d0d0d0" stroke-width=".8"/><path d="M4.5 11.2 h4.6" stroke="#e8e8e8" stroke-width="1"/></svg>
<svg style="left:1240.3px;top:170.0px" width="16.0" height="16.0" viewBox="0 0 16 16"><path d="M5.5 0.8 l4 2 l-3 5 l3 1 l-4.2 6 l1.2 -5 l-2.8 -1z" fill="#eadf8a" stroke="#a8a048" stroke-width=".8" stroke-linejoin="round"/><circle cx="3.6" cy="14" r="1.4" fill="#1f3f8f"/><circle cx="12" cy="12" r="3.3" fill="#6f9fd8" stroke="#2a5a9f" stroke-width="1.1"/></svg>
<div class="sep" style="left:1052px;top:169px;height:15px;background:#dcdcdc"></div>
<div class="sep" style="left:1148px;top:169px;height:15px;background:#dcdcdc"></div>
<div class="sep" style="left:1188px;top:169px;height:15px;background:#dcdcdc"></div>
<div class="sep" style="left:1228px;top:169px;height:15px;background:#dcdcdc"></div>
<svg style="left:1277.0px;top:165.5px" width="16.0" height="16.0" viewBox="0 0 16 16"><path d="M2.8 5.4 h10.4 l-5.2 5z" fill="#fff" stroke="#111" stroke-width="1.3" stroke-linejoin="miter"/></svg>
<svg style="left:607.8px;top:197.3px" width="14.4" height="14.4" viewBox="0 0 16 16"><rect x="2" y="2.4" width="12" height="12" rx="2" fill="#ec6c3e" stroke="#b84a22"/><path d="M4.4 7.8 l2.8 3.4 l6 -9" fill="none" stroke="#3a2a22" stroke-width="1.9"/></svg>
<svg style="left:625.2px;top:197.7px" width="13.6" height="13.6" viewBox="0 0 16 16"><circle cx="10.2" cy="5.8" r="3.3" fill="#8fb4e0" stroke="#2a5a9f" stroke-width="1.2"/><path d="M1.8 11 l2 2 l3.4 -4.4" fill="none" stroke="#2a5a9f" stroke-width="1.5"/></svg>
<svg style="left:11.5px;top:355.0px" width="16.0" height="16.0" viewBox="0 0 16 16"><path d="M2.5 1.5 h7 l3.5 3.5 v10 h-10.5z" fill="#f7faff" stroke="#b08f4c"/><path d="M9.5 1.5 v3.5 h3.5" fill="#fff" stroke="#b08f4c" stroke-width=".8"/><path d="M8.3 5.2 v5.2 q0 2 -2 2 q-1.3 0 -1.6 -1.2" fill="none" stroke="#2257a8" stroke-width="1.9"/></svg>
<svg style="left:123.5px;top:355.0px" width="16.0" height="16.0" viewBox="0 0 16 16"><path d="M2.5 1.5 h7 l3.5 3.5 v10 h-10.5z" fill="#f7faff" stroke="#b08f4c"/><path d="M9.5 1.5 v3.5 h3.5" fill="#fff" stroke="#b08f4c" stroke-width=".8"/><path d="M8.3 5.2 v5.2 q0 2 -2 2 q-1.3 0 -1.6 -1.2" fill="none" stroke="#2257a8" stroke-width="1.9"/></svg>
<svg style="left:209.5px;top:355.5px" width="16.0" height="16.0" viewBox="0 0 16 16"><path d="M4.7 5 L11.3 11 M11.3 5 L4.7 11" stroke="#161616" stroke-width="3.3" stroke-linecap="square"/><path d="M4.3 4.6 L11.7 11.4 M11.7 4.6 L4.3 11.4" stroke="#fff" stroke-width="1.25" stroke-linecap="butt"/></svg>
<svg style="left:235.3px;top:355.0px" width="16.0" height="16.0" viewBox="0 0 16 16"><path d="M2.5 1.5 h7 l3.5 3.5 v10 h-10.5z" fill="#f7faff" stroke="#b08f4c"/><path d="M9.5 1.5 v3.5 h3.5" fill="#fff" stroke="#b08f4c" stroke-width=".8"/><path d="M8.3 5.2 v5.2 q0 2 -2 2 q-1.3 0 -1.6 -1.2" fill="none" stroke="#2257a8" stroke-width="1.9"/></svg>
<svg style="left:382.6px;top:355.0px" width="16.0" height="16.0" viewBox="0 0 16 16"><rect x="2.5" y="1.5" width="11" height="13.5" fill="#f4f8ff" stroke="#8fa2c8"/><path d="M5.2 5 l5.6 7 M10.8 5 l-5.6 7" stroke="#1f3f8f" stroke-width="1.8"/></svg>
<svg style="left:590.2px;top:355.0px" width="16.0" height="16.0" viewBox="0 0 16 16"><path d="M2.5 1.5 h7 l3.5 3.5 v10 h-10.5z" fill="#f7faff" stroke="#b08f4c"/><path d="M9.5 1.5 v3.5 h3.5" fill="#fff" stroke="#b08f4c" stroke-width=".8"/><path d="M8.3 5.2 v5.2 q0 2 -2 2 q-1.3 0 -1.6 -1.2" fill="none" stroke="#2257a8" stroke-width="1.9"/></svg>
<svg style="left:698.2px;top:355.0px" width="16.0" height="16.0" viewBox="0 0 16 16"><path d="M2.5 1.5 h7 l3.5 3.5 v10 h-10.5z" fill="#f7faff" stroke="#b08f4c"/><path d="M9.5 1.5 v3.5 h3.5" fill="#fff" stroke="#b08f4c" stroke-width=".8"/><path d="M8.3 5.2 v5.2 q0 2 -2 2 q-1.3 0 -1.6 -1.2" fill="none" stroke="#2257a8" stroke-width="1.9"/></svg>
<svg style="left:891.5px;top:355.0px" width="16.0" height="16.0" viewBox="0 0 16 16"><path d="M2.5 1.5 h7 l3.5 3.5 v10 h-10.5z" fill="#fbfcff" stroke="#a89060"/><path d="M9.5 1.5 v3.5 h3.5" fill="#fff" stroke="#a89060" stroke-width=".8"/><path d="M3 0.8 v4.4 q0 1.6 -1.5 1.6" fill="none" stroke="#2560b4" stroke-width="1.6"/><text x="2.2" y="14.4" font-family="Liberation Sans" font-size="7" font-weight="bold" fill="#1a2a5a" letter-spacing="-.4">010</text></svg>
<svg style="left:30.0px;top:410.4px" width="16.0" height="16.0" viewBox="0 0 16 16"><circle cx="8" cy="8" r="4.3" fill="#e6e9f1" stroke="#a9b1c4" stroke-width="1"/><path d="M5.4 8 h5.2 M8 5.4 v5.2" stroke="#1a2238" stroke-width="1.15"/></svg>
<svg style="left:30.0px;top:515.2px" width="16.0" height="16.0" viewBox="0 0 16 16"><circle cx="8" cy="8" r="4.3" fill="#fbfcfe" stroke="#b9c1d2" stroke-width="1"/><path d="M5.4 8 h5.2" stroke="#8a9ab8" stroke-width="1.15"/></svg>
<svg style="left:12.5px;top:546.7px" width="13.6" height="13.6" viewBox="0 0 16 16"><circle cx="10.6" cy="8" r="4.4" fill="#b9d2f0" stroke="#fff" stroke-width="2.2"/><circle cx="10.6" cy="8" r="4.4" fill="none" stroke="#3f6cae" stroke-width="1"/><path d="M0.6 5.8 h4.6 v-2.8 l5.4 5 l-5.4 5 v-2.8 h-4.6z" fill="#4f86cc" stroke="#fff" stroke-width="1.8"/><path d="M0.6 5.8 h4.6 v-2.8 l5.4 5 l-5.4 5 v-2.8 h-4.6z" fill="#4f86cc" stroke="#2a5a9f" stroke-width=".7"/><path d="M0.5 13.2 l1.6 1.8 l2.4 -3" stroke="#2a5a9f" stroke-width="1.1" fill="none"/></svg>
<svg style="left:11.5px;top:697.5px" width="16.0" height="16.0" viewBox="0 0 16 16"><rect x="1" y="1.5" width="13" height="9.5" rx="1" fill="#e8f0fc" stroke="#2c5cb4" stroke-width="1.6"/><path d="M4 5 h7 M4 7.5 h5" stroke="#2c5cb4" stroke-width="1.2"/><rect x="5.5" y="11.5" width="4" height="1.5" fill="#2c5cb4"/><rect x="3" y="13" width="9" height="1.6" fill="#2c5cb4"/></svg>
<svg style="left:89.2px;top:698.3px" width="16.0" height="16.0" viewBox="0 0 16 16"><path d="M4.7 5 L11.3 11 M11.3 5 L4.7 11" stroke="#161616" stroke-width="3.3" stroke-linecap="square"/><path d="M4.3 4.6 L11.7 11.4 M11.7 4.6 L4.3 11.4" stroke="#fff" stroke-width="1.25" stroke-linecap="butt"/></svg>
<svg style="left:114.3px;top:697.5px" width="16.0" height="16.0" viewBox="0 0 16 16"><rect x="3.5" y="2.5" width="11" height="12.5" rx="1" fill="#fdfdfd" stroke="#b08a4c"/><rect x="6.5" y="0.8" width="5" height="3" rx="1" fill="#9aa0a8" stroke="#6a7078" stroke-width=".7"/><path d="M9 7 h4 M9 9.5 h4 M9 12 h4" stroke="#7a9ad0" stroke-width="1"/><path d="M0.8 9 l3 3.4 l4.6 -6.6" fill="none" stroke="#1f5fc4" stroke-width="2"/></svg>
<svg style="left:180.5px;top:697.5px" width="16.0" height="16.0" viewBox="0 0 16 16"><text x="0.5" y="13.5" font-family="Liberation Serif" font-size="15" font-weight="bold" fill="#2f8a4a">J</text><text x="8" y="13.5" font-family="Liberation Serif" font-size="10.5" font-weight="bold" fill="#d03a4a">U</text></svg>
<svg style="left:900.6px;top:698.0px" width="16.0" height="16.0" viewBox="0 0 16 16"><rect x="2.2" y="2.7" width="11.6" height="11.4" rx="1" fill="#e8273a" stroke="#bc1a2c" stroke-width="1.2"/><rect x="3.4" y="3.9" width="9.2" height="9" fill="none" stroke="#f2687a" stroke-width=".9"/></svg>
<svg style="left:928.6px;top:698.0px" width="16.0" height="16.0" viewBox="0 0 16 16"><path d="M3 3.2 L13 12.8 M13 3.2 L3 12.8" stroke="#c4c4c4" stroke-width="3.4" stroke-linecap="round"/></svg>
<svg style="left:956.6px;top:698.0px" width="16.0" height="16.0" viewBox="0 0 16 16"><path d="M1.8 1.6 L9.6 9 M9.6 1.6 L1.8 9" stroke="#d0d0d0" stroke-width="2.6" stroke-linecap="round"/><path d="M5.4 6 L14.4 14.6 M14.4 6 L5.4 14.6" stroke="#c2c2c2" stroke-width="3.2" stroke-linecap="round"/></svg>
<svg style="left:996.6px;top:698.0px" width="16.0" height="16.0" viewBox="0 0 16 16"><path d="M1.5 0.8 h6.5 l2.5 2.5 v10 h-9z" fill="#fbfcff" stroke="#b09a68"/><path d="M3 4.5 h5 M3 6.5 h6 M3 8.5 h6 M3 10.5 h4" stroke="#5f83c4" stroke-width=".9"/><path d="M8.5 8.5 L14.5 14.5 M14.5 8.5 L8.5 14.5" stroke="#222" stroke-width="2.3"/></svg>
<svg style="left:1024.2px;top:698.0px" width="16.0" height="16.0" viewBox="0 0 16 16"><rect x="3" y="0.8" width="12.5" height="13" fill="#dce8f8" stroke="#7f9fd0"/><rect x="11" y="1.3" width="4" height="12" fill="#f4f7fc" stroke="#5f7fb8" stroke-width=".8"/><rect x="12" y="3" width="2" height="2" fill="#24468f"/><rect x="12" y="9.5" width="2" height="2" fill="#24468f"/><path d="M3.2 9 v-2 a2.3 2.3 0 0 1 4.6 0 v2" fill="none" stroke="#a8801c" stroke-width="1.3"/><rect x="1.2" y="8.8" width="8.6" height="6.4" rx="1" fill="#f8d45a" stroke="#a8801c"/><circle cx="5.5" cy="12" r="1" fill="#6a4a0a"/></svg>
<svg style="left:1052.5px;top:698.0px" width="16.0" height="16.0" viewBox="0 0 16 16"><rect x="4.5" y="0.8" width="11" height="8.2" fill="#f4f8ff" stroke="#3f6cc4" stroke-width="1.2"/><path d="M7 3.6 h6 M7 6 h4" stroke="#3f6cc4" stroke-width="1.1"/><rect x="0.8" y="6.5" width="7.5" height="5.5" fill="#dfe9fa" stroke="#3f6cc4" stroke-width="1.2"/><path d="M4.5 12 v2 M2 14.6 h5" stroke="#3f6cc4" stroke-width="1.4"/></svg>
<svg style="left:1080.5px;top:698.0px" width="16.0" height="16.0" viewBox="0 0 16 16"><rect x="4.5" y="0.8" width="11" height="8.2" fill="#f4f8ff" stroke="#3f6cc4" stroke-width="1.2"/><path d="M6.8 2.8 l3.6 4 M10.4 2.8 l-3.6 4" stroke="#d8202c" stroke-width="1.6"/><path d="M11.8 3.8 h2.2 M11.8 6 h2.2" stroke="#3f6cc4" stroke-width="1"/><rect x="0.8" y="6.5" width="7.5" height="5.5" fill="#dfe9fa" stroke="#3f6cc4" stroke-width="1.2"/><path d="M4.5 12 v2 M2 14.6 h5" stroke="#3f6cc4" stroke-width="1.4"/></svg>
<svg style="left:1120.5px;top:698.0px" width="16.0" height="16.0" viewBox="0 0 16 16"><rect x="1.5" y="4.8" width="12" height="10" fill="#f6f9ff" stroke="#7f95c0"/><rect x="2" y="5.3" width="11" height="2.4" fill="#3f78c8"/><path d="M7 11 L11 6.5" stroke="#555" stroke-width="1"/><path d="M9.6 5.6 L13.4 1 L16 3.4 L11.8 7.6z" fill="#3fa84f" stroke="#1d7a34" stroke-width=".8"/></svg>
<svg style="left:1148.6px;top:698.0px" width="16.0" height="16.0" viewBox="0 0 16 16"><rect x="1" y="1.5" width="13" height="9.5" rx="1" fill="#dedede" stroke="#bdbdbd" stroke-width="1.6"/><path d="M4 5 h7 M4 7.5 h5" stroke="#c2c2c2" stroke-width="1.2"/><rect x="5.5" y="11.5" width="4" height="1.5" fill="#c2c2c2"/><rect x="3" y="13" width="9" height="1.6" fill="#c2c2c2"/></svg>
<svg style="left:1171.5px;top:698.3px" width="16.0" height="16.0" viewBox="0 0 16 16"><path d="M4.4 6 h7.2 l-3.6 4.8z" fill="#bdbdbd"/></svg>
<svg style="left:1196.3px;top:698.0px" width="16.0" height="16.0" viewBox="0 0 16 16"><rect x="1" y="3.5" width="12.5" height="11.5" fill="#fcfdff" stroke="#b39758"/><rect x="1.5" y="4" width="11.5" height="2.6" fill="#3f78c8"/><rect x="1.5" y="6.6" width="11.5" height="1" fill="#a9c6ec"/><path d="M13 8 q0 6 -7 6.5" fill="none" stroke="#f3c945" stroke-width="1.2"/><path d="M12.5 0.3 v6.4 M9.3 3.5 h6.4" stroke="#b07a10" stroke-width="2.6"/><path d="M12.5 1 v5 M10 3.5 h5" stroke="#fff2a8" stroke-width="1.1"/></svg>
<svg style="left:1219.5px;top:698.3px" width="16.0" height="16.0" viewBox="0 0 16 16"><path d="M4.4 6 h7.2 l-3.6 4.8z" fill="#6f6f6f"/></svg>
<div class="sep" style="left:984px;top:697px;height:15px;background:#c4c4c4"></div>
<div class="sep" style="left:1108px;top:697px;height:15px;background:#c4c4c4"></div>
<span class="t" style="left:76.0px;top:5.1px;font-size:15px;color:#dfdbd2;letter-spacing:0.016px;font-weight:bold;">Debug - Watering/src/com/supermanhamuerto/watering/Gpio.java - Eclipse</span>
<span class="t" style="left:8.0px;top:30.1px;font-size:15px;color:#dfdbd2;letter-spacing:-0.057px;">File</span>
<span class="t" style="left:46.0px;top:30.1px;font-size:15px;color:#dfdbd2;letter-spacing:0.214px;">Edit</span>
<span class="t" style="left:87.0px;top:30.1px;font-size:15px;color:#dfdbd2;letter-spacing:-0.406px;">Source</span>
<span class="t" style="left:147.5px;top:30.1px;font-size:15px;color:#dfdbd2;letter-spacing:0.114px;">Refactor</span>
<span class="t" style="left:220.5px;top:30.1px;font-size:15px;color:#dfdbd2;letter-spacing:-0.029px;">Navigate</span>
<span class="t" style="left:294.5px;top:30.1px;font-size:15px;color:#dfdbd2;letter-spacing:-0.606px;">Search</span>
<span class="t" style="left:353.5px;top:30.1px;font-size:15px;color:#dfdbd2;letter-spacing:0.219px;">Project</span>
<span class="t" style="left:417.0px;top:30.1px;font-size:15px;color:#dfdbd2;letter-spacing:-1.766px;">Run</span>
<span class="t" style="left:456.0px;top:30.1px;font-size:15px;color:#dfdbd2;letter-spacing:0.128px;">Window</span>
<span class="t" style="left:524.5px;top:30.1px;font-size:15px;color:#dfdbd2;letter-spacing:-0.453px;">Help</span>
<span class="t" style="left:758.0px;top:93.5px;font-size:15px;color:#a9a9a9;letter-spacing:-0.276px;">Quick Access</span>
<span class="t" style="left:956.0px;top:93.5px;font-size:15px;color:#3a3a3a;letter-spacing:-1.146px;">Java EE</span>
<span class="t" style="left:1037.5px;top:93.5px;font-size:15px;color:#3a3a3a;letter-spacing:-0.426px;">Debug</span>
<span class="t" style="left:1110.5px;top:93.5px;font-size:15px;color:#3a3a3a;letter-spacing:-0.896px;">Java</span>
<span class="t" style="left:1171.0px;top:93.5px;font-size:15px;color:#3a3a3a;letter-spacing:-0.386px;">Resource</span>
<span class="t" style="left:1264.5px;top:93.5px;font-size:15px;color:#3a3a3a;letter-spacing:-0.539px;">Web</span>
<span class="t" style="left:31.5px;top:136.0px;font-size:15px;color:#333;letter-spacing:-0.426px;">Debug</span>
<span class="t" style="left:123.5px;top:136.0px;font-size:15px;color:#9a9a9a;letter-spacing:-0.531px;">Servers</span>
<span class="t" style="left:46.5px;top:164.8px;font-size:15px;color:#333;letter-spacing:0.170px;">Watering [Java Application]</span>
<span class="t" style="left:57.2px;top:187.8px;font-size:15px;color:#333;letter-spacing:0.119px;">com.supermanhamuerto.watering.App at localhost:56741</span>
<span class="t" style="left:68.4px;top:210.8px;font-size:15px;color:#333;letter-spacing:-0.062px;">Thread [main] (Suspended (breakpoint at line 15 in Gpio))</span>
<span class="t" style="left:79.2px;top:233.8px;font-size:15px;color:#333;letter-spacing:-0.070px;">Gpio.run() line: 15</span>
<span class="t" style="left:79.2px;top:256.8px;font-size:15px;color:#333;letter-spacing:0.080px;">App.main(String[]) line: 25</span>
<span class="t" style="left:57.2px;top:279.8px;font-size:15px;color:#333;letter-spacing:0.008px;">/usr/lib/jvm/java-7-openjdk/bin/java (Dec 15, 2013 11:21:05 PM)</span>
<span class="t" style="left:611.6px;top:136.0px;font-size:15px;color:#9a9a9a;letter-spacing:0.122px;">Variables</span>
<span class="t" style="left:705.0px;top:136.0px;font-size:15px;color:#333;letter-spacing:0.038px;">Breakpoints</span>
<span class="t" style="left:836.0px;top:136.0px;font-size:15px;color:#9a9a9a;letter-spacing:-0.270px;">Expressions</span>
<span class="t" style="left:645.3px;top:194.7px;font-size:15px;color:#333;letter-spacing:-0.176px;">Gpio [line: 15] - run()</span>
<span class="t" style="left:31.5px;top:353.7px;font-size:15px;color:#444;letter-spacing:-0.234px;">Gpio.java</span>
<span class="t" style="left:143.5px;top:353.7px;font-size:15px;color:#444;letter-spacing:-0.234px;">Gpio.java</span>
<span class="t" style="left:255.4px;top:353.7px;font-size:15px;color:#444;letter-spacing:-0.068px;">TestClient.java</span>
<span class="t" style="left:402.3px;top:353.7px;font-size:15px;color:#444;letter-spacing:0.356px;">applicationContext.xml</span>
<span class="t" style="left:610.2px;top:353.7px;font-size:15px;color:#444;letter-spacing:-0.039px;">App.java</span>
<span class="t" style="left:718.3px;top:353.7px;font-size:15px;color:#444;letter-spacing:-0.071px;">PacketProcessor.java</span>
<span class="t" style="left:911.5px;top:353.7px;font-size:15px;color:#444;letter-spacing:0.270px;">AbstractApplicationContext.class</span>
<span class="t" style="left:31.5px;top:696.8px;font-size:15px;color:#444;letter-spacing:-0.374px;">Console</span>
<span class="t" style="left:134.7px;top:696.8px;font-size:15px;color:#444;letter-spacing:-0.761px;">Tasks</span>
<span class="t" style="left:200.0px;top:696.8px;font-size:15px;color:#444;letter-spacing:-0.047px;">JUnit</span>
<span class="t" style="left:13.0px;top:723.1px;font-size:15px;color:#444;letter-spacing:0.054px;">Watering [Java Application] /usr/lib/jvm/java-7-openjdk/bin/java (Dec 15, 2013 11:21:05 PM)</span>
<span class="t" style="left:660.7px;top:939.1px;font-size:15px;color:#3c3c3c;letter-spacing:0.550px;">Writable</span>
<span class="t" style="left:780.6px;top:939.1px;font-size:15px;color:#3c3c3c;letter-spacing:-0.026px;">Smart Insert</span>
<span class="t" style="left:892.8px;top:939.1px;font-size:15px;color:#3c3c3c;letter-spacing:-0.986px;">15 : 1</span>
<svg style="left:570px;top:398px;filter:drop-shadow(1px 1px 1px rgba(0,0,0,.35))" width="20" height="26"><path d="M3.2 2.4 L3.2 20.1 L7 16.4 L9.2 21 Q10.6 22.2 12.2 19.8 L10.3 14.7 L14.6 14.3 Z" fill="#fff" stroke="#000" stroke-width="1.3" stroke-linejoin="miter"/></svg>
</body></html>
